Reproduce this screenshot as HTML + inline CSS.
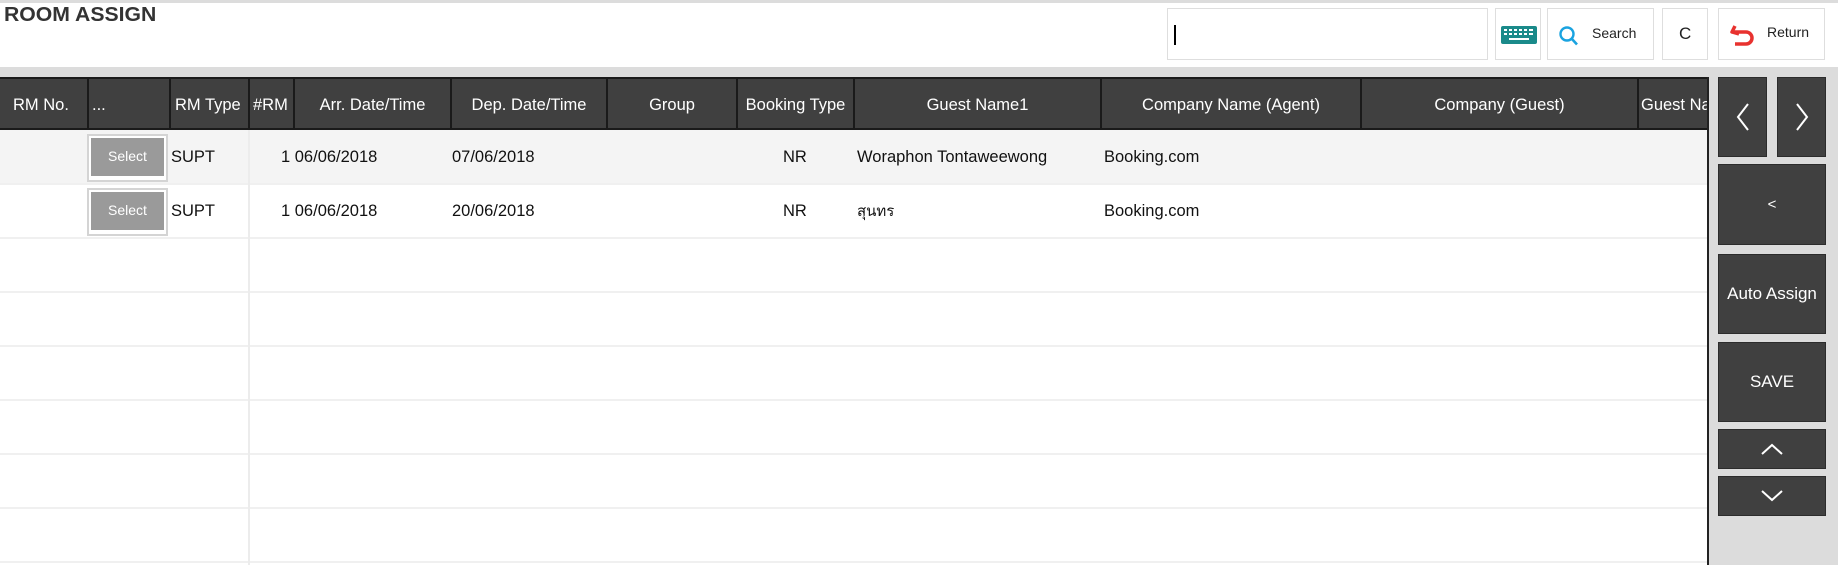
<!DOCTYPE html>
<html><head><meta charset="utf-8"><style>
*{margin:0;padding:0;box-sizing:border-box}
body{width:1838px;height:565px;overflow:hidden;background:#fff;font-family:"Liberation Sans","Noto Sans CJK SC",sans-serif;position:relative}
.a{position:absolute}
.tb{position:absolute;background:#fff;border:1px solid #dedede}
.hd{position:absolute;top:77px;height:53px;background:#404040;color:#fff;font-size:16.5px;line-height:53px;border-left:2px solid #1a1a1a;border-top:2px solid #1a1a1a;border-bottom:2px solid #1a1a1a;white-space:nowrap;overflow:hidden}
.c{text-align:center}
.row{position:absolute;left:0;width:1707px;height:54px;border-bottom:2px solid #f0f0f0}
.t{position:absolute;font-size:16.5px;color:#111;white-space:nowrap}
.btn{position:absolute;background:#404040;border:1px solid #2c2c2c;color:#fff;font-size:17px;display:flex;align-items:center;justify-content:center}
.sel{position:absolute;left:87px;width:81px;height:48px;border:2px solid #d4d4d4;background:#fff}
.sel div{position:absolute;left:2px;top:2px;right:2px;bottom:4px;background:#9a9a9a;color:#fff;font-size:14px;text-align:center;line-height:36px}
</style></head><body>
<div class="a" style="left:0;top:0;width:1838px;height:3px;background:#dcdcdc"></div>
<div class="a" style="left:4px;top:4px;font-size:20px;font-weight:bold;color:#333;transform:scaleX(1.06);transform-origin:left">ROOM ASSIGN</div>
<div class="a" style="left:0;top:67px;width:1838px;height:10px;background:#dcdcdc"></div>
<div class="tb" style="left:1167px;top:8px;width:321px;height:52px"><div class="a" style="left:6px;top:16px;width:2px;height:20px;background:#000"></div></div>
<div class="tb" style="left:1495px;top:8px;width:46px;height:52px">
<svg class="a" style="left:4px;top:16px" width="38" height="20" viewBox="0 0 38 20"><rect x="1" y="1" width="36" height="18" rx="2" fill="#1a8a8a"/><g fill="#fff"><rect x="4" y="4" width="3" height="2"/><rect x="9" y="4" width="3" height="2"/><rect x="14" y="4" width="3" height="2"/><rect x="19" y="4" width="3" height="2"/><rect x="24" y="4" width="3" height="2"/><rect x="29" y="4" width="4" height="2"/><rect x="4" y="8" width="3" height="2"/><rect x="9" y="8" width="3" height="2"/><rect x="14" y="8" width="3" height="2"/><rect x="19" y="8" width="3" height="2"/><rect x="24" y="8" width="3" height="2"/><rect x="29" y="8" width="4" height="2"/><rect x="9" y="13" width="20" height="2"/></g></svg></div>
<div class="tb" style="left:1547px;top:8px;width:107px;height:52px">
<svg class="a" style="left:10px;top:16px" width="22" height="22" viewBox="0 0 22 22"><circle cx="9" cy="9" r="6.5" fill="none" stroke="#1aa3e0" stroke-width="2.4"/><path d="M13.5 13.5L19 19.5" stroke="#1aa3e0" stroke-width="2.6"/></svg>
<div class="a" style="left:44px;top:16px;font-size:14px;color:#222">Search</div></div>
<div class="tb" style="left:1662px;top:8px;width:46px;height:52px"><div class="a" style="left:16px;top:15px;font-size:17px;color:#222">C</div></div>
<div class="tb" style="left:1718px;top:8px;width:107px;height:52px">
<svg class="a" style="left:10px;top:13px" width="28" height="28" viewBox="0 0 28 28"><path d="M6 4L3 10L10 12" fill="none" stroke="#e8322f" stroke-width="3.5" stroke-linejoin="round"/><path d="M4 10H17A6 6 0 0 1 17 22H6" fill="none" stroke="#e8322f" stroke-width="3.5"/></svg>
<div class="a" style="left:48px;top:15px;font-size:14px;color:#222">Return</div></div>

<div class="hd" style="left:0;width:87px;padding-left:13px;border-left:none">RM No.</div>
<div class="hd" style="left:87px;width:82px;padding-left:3px">...</div>
<div class="hd" style="left:169px;width:79px;padding-left:4px">RM Type</div>
<div class="hd" style="left:248px;width:45px;padding-left:3px">#RM</div>
<div class="hd c" style="left:293px;width:157px">Arr. Date/Time</div>
<div class="hd c" style="left:450px;width:156px">Dep. Date/Time</div>
<div class="hd c" style="left:606px;width:130px">Group</div>
<div class="hd c" style="left:736px;width:117px">Booking Type</div>
<div class="hd c" style="left:853px;width:247px">Guest Name1</div>
<div class="hd c" style="left:1100px;width:260px">Company Name (Agent)</div>
<div class="hd c" style="left:1360px;width:277px">Company (Guest)</div>
<div class="hd" style="left:1637px;width:70px;padding-left:2px">Guest Name</div>

<div class="row" style="top:130px;height:55px;background:#f4f4f4"></div>
<div class="row" style="top:185px"></div>
<div class="row" style="top:239px"></div>
<div class="row" style="top:293px"></div>
<div class="row" style="top:347px"></div>
<div class="row" style="top:401px"></div>
<div class="row" style="top:455px"></div>
<div class="row" style="top:509px"></div>
<div class="a" style="left:248px;top:130px;width:2px;height:435px;background:#ececec"></div>

<div class="sel" style="top:134px"><div>Select</div></div>
<div class="sel" style="top:188px"><div>Select</div></div>
<div class="t" style="left:171px;top:148px">SUPT</div>
<div class="t" style="left:281px;top:148px">1 06/06/2018</div>
<div class="t" style="left:452px;top:148px">07/06/2018</div>
<div class="t" style="left:783px;top:148px">NR</div>
<div class="t" style="left:857px;top:148px">Woraphon Tontaweewong</div>
<div class="t" style="left:1104px;top:148px">Booking.com</div>
<div class="t" style="left:171px;top:202px">SUPT</div>
<div class="t" style="left:281px;top:202px">1 06/06/2018</div>
<div class="t" style="left:452px;top:202px">20/06/2018</div>
<div class="t" style="left:783px;top:202px">NR</div>
<div class="t" style="left:857px;top:199px;font-family:'DejaVu Sans',sans-serif;font-size:15px">สุนทร</div>
<div class="t" style="left:1104px;top:202px">Booking.com</div>

<div class="a" style="left:1707px;top:77px;width:131px;height:488px;background:#dcdcdc;border-left:2px solid #222"></div>
<div class="btn" style="left:1718px;top:77px;width:49px;height:80px"><svg width="16" height="30" viewBox="0 0 16 30"><path d="M13 2L3 15L13 28" fill="none" stroke="#fff" stroke-width="2"/></svg></div>
<div class="btn" style="left:1777px;top:77px;width:49px;height:80px"><svg width="16" height="30" viewBox="0 0 16 30"><path d="M3 2L13 15L3 28" fill="none" stroke="#fff" stroke-width="2"/></svg></div>
<div class="btn" style="left:1718px;top:164px;width:108px;height:81px;font-size:15px">&lt;</div>
<div class="btn" style="left:1718px;top:254px;width:108px;height:80px">Auto Assign</div>
<div class="btn" style="left:1718px;top:342px;width:108px;height:80px">SAVE</div>
<div class="btn" style="left:1718px;top:429px;width:108px;height:40px"><svg width="24" height="14" viewBox="0 0 24 14"><path d="M2 12L12 3L22 12" fill="none" stroke="#fff" stroke-width="2"/></svg></div>
<div class="btn" style="left:1718px;top:476px;width:108px;height:40px"><svg width="24" height="14" viewBox="0 0 24 14"><path d="M2 2L12 11L22 2" fill="none" stroke="#fff" stroke-width="2"/></svg></div>
</body></html>
